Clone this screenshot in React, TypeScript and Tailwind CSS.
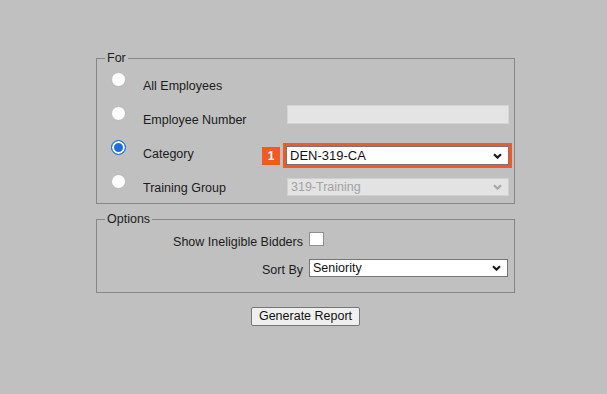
import React from "react";

// small chevron like the browser's select arrow
function Chevron({ color = "#222" }: { color?: string }) {
  return (
    <svg width="9" height="6" viewBox="0 0 9 6" fill="none">
      <path d="M1 1.2 L4.5 4.6 L8 1.2" stroke={color} strokeWidth="2.2" />
    </svg>
  );
}

function FakeSelect({
  value,
  className,
  disabled,
}: {
  value: string;
  className: string;
  disabled?: boolean;
}) {
  return (
    <div
      role="combobox"
      aria-disabled={disabled}
      className={
        "flex items-center justify-between pl-[3px] pr-[6px] border " +
        (disabled
          ? "bg-[#e3e3e3] border-[#d0d0d0] text-[#a2a2a2] "
          : "bg-white border-[#767676] text-[#111] ") +
        className
      }
    >
      <span className="leading-[15px]">{value}</span>
      <Chevron color={disabled ? "#a8a8a8" : "#1a1a1a"} />
    </div>
  );
}

const radioCls =
  "appearance-none w-[15px] h-[15px] rounded-full bg-white border border-[#b8b8b8] checked:border-[#1a6fe0] checked:border-[1.5px] checked:bg-[#1a6fe0] checked:shadow-[inset_0_0_0_2px_white]";

export default function App() {
  return (
    <div className="min-h-screen w-full bg-[#c0c0c0] text-[12.5px] text-[#1c1c1c] font-['Liberation_Sans',Arial,sans-serif]">
      <div className="flex justify-center pl-[4px] pt-[51px]">
        <div className="w-[419px] flex flex-col">
          {/* FOR */}
          <fieldset className="border border-[#878787] pt-[4px]">
            <legend className="ml-[8px] px-[2px] leading-[14px]">For</legend>

            <div className="flex h-[34px] pl-[14px]">
              <input type="radio" name="for" className={radioCls + " mt-[3px]"} readOnly />
              <span className="ml-[17px] w-[144px] mt-[10px] leading-[15px]">All Employees</span>
            </div>

            <div className="flex h-[34px] pl-[14px]">
              <input type="radio" name="for" className={radioCls + " mt-[3px]"} readOnly />
              <span className="ml-[17px] w-[144px] mt-[10px] leading-[15px]">Employee Number</span>
              <input
                type="text"
                disabled
                className="mt-[2px] w-[222px] h-[19px] bg-[#e4e4e4] border border-[#d4d4d4]"
              />
            </div>

            <div className="flex h-[34px] pl-[14px]">
              <input type="radio" name="for" className={radioCls + " mt-[3px]"} defaultChecked />
              <span className="ml-[17px] w-[119px] mt-[10px] leading-[15px]">Category</span>
              <div className="flex items-center gap-[3px] mt-[3px]">
                <span className="w-[18px] h-[18px] bg-[#f05a24] text-white font-bold text-[12px] flex items-center justify-center">
                  1
                </span>
                <div className="w-[229px] h-[25px] border-[3px] border-[#f05a24]">
                  <FakeSelect value="DEN-319-CA" className="w-full h-full text-[13px]" />
                </div>
              </div>
            </div>

            <div className="flex h-[32px] pl-[14px]">
              <input type="radio" name="for" className={radioCls + " mt-[3px]"} readOnly />
              <span className="ml-[17px] w-[144px] mt-[10px] leading-[15px]">Training Group</span>
              <FakeSelect value="319-Training" disabled className="mt-[7px] w-[222px] h-[18px]" />
            </div>
          </fieldset>

          {/* OPTIONS */}
          <fieldset className="border border-[#878787] mt-[8px]">
            <legend className="ml-[8px] px-[2px] leading-[14px]">Options</legend>

            <div className="flex h-[30px]">
              <span className="w-[206px] text-right mt-[9px] leading-[15px]">Show Ineligible Bidders</span>
              <input
                type="checkbox"
                className="appearance-none ml-[6px] mt-[6px] w-[15px] h-[14px] bg-white border border-[#8f8f8f]"
              />
            </div>

            <div className="flex h-[36px]">
              <span className="w-[206px] text-right mt-[7px] leading-[15px]">Sort By</span>
              <FakeSelect value="Seniority" className="ml-[6px] mt-[3px] w-[199px] h-[18px]" />
            </div>
          </fieldset>

          <div className="flex justify-center mt-[14px]">
            <button className="h-[19px] px-[7px] bg-[#efefef] border border-[#767676] rounded-[2px] leading-[15px] text-[#111]">
              Generate Report
            </button>
          </div>
        </div>
      </div>
    </div>
  );
}
